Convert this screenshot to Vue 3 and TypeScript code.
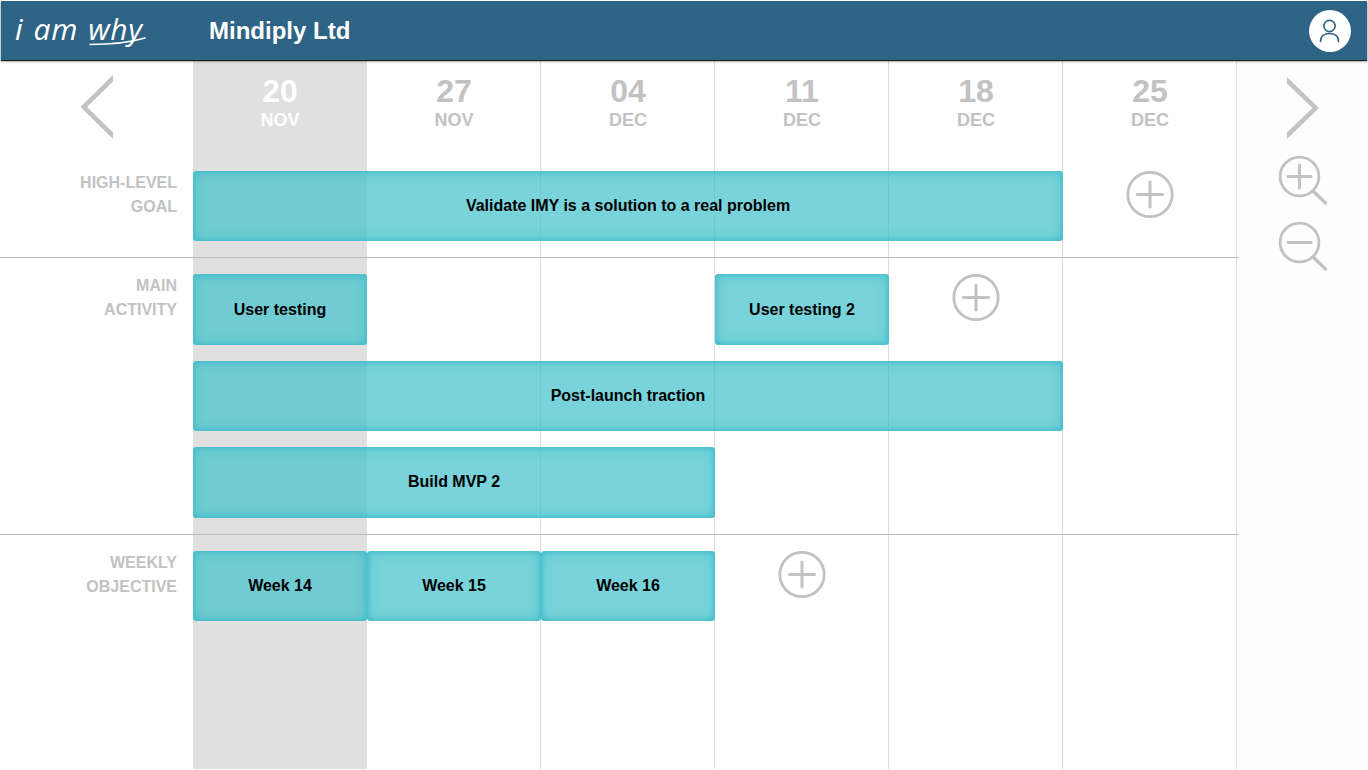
<script setup lang="ts">
interface Week {
  day: string;
  month: string;
  current?: boolean;
}

interface Bar {
  title: string;
  col: string;
  row: number;
  tight?: boolean;
}

const weeks: Week[] = [
  { day: "20", month: "NOV", current: true },
  { day: "27", month: "NOV" },
  { day: "04", month: "DEC" },
  { day: "11", month: "DEC" },
  { day: "18", month: "DEC" },
  { day: "25", month: "DEC" },
];

// grid lines: column 2 is the first week, row 2 the goal row
const bars: Bar[] = [
  { title: "Validate IMY is a solution to a real problem", col: "2 / 7", row: 2 },
  { title: "User testing", col: "2 / 3", row: 4 },
  { title: "User testing 2", col: "5 / 6", row: 4 },
  { title: "Post-launch traction", col: "2 / 7", row: 6 },
  { title: "Build MVP 2", col: "2 / 5", row: 8, tight: true },
  { title: "Week 14", col: "2 / 3", row: 10 },
  { title: "Week 15", col: "3 / 4", row: 10 },
  { title: "Week 16", col: "4 / 5", row: 10 },
];

const addButtons = [
  { col: 7, row: 2 },
  { col: 6, row: 4 },
  { col: 5, row: 10 },
];
</script>

<template>
  <div class="page">
    <header class="topbar">
      <div class="logo">
        <span class="logo-text">i am why</span>
        <svg class="logo-swoosh" viewBox="0 0 60 12" width="60" height="12" fill="none">
          <path d="M2 9.5 C20 9.5 40 8 57 3" stroke="#fff" stroke-width="1.6" stroke-linecap="round" />
        </svg>
      </div>
      <div class="company">Mindiply Ltd</div>
      <div class="avatar">
        <svg viewBox="0 0 42 42" width="42" height="42" fill="none" stroke="#2d6384" stroke-width="1.6">
          <circle cx="20.5" cy="16" r="5.6" />
          <path d="M11.5 31.5 C11.5 26 15.5 23.5 20.5 23.5 C25.5 23.5 29.5 26 29.5 31.5" stroke-linecap="round" />
        </svg>
      </div>
    </header>

    <main class="board">
      <div
        v-for="(week, i) in weeks"
        :key="'col' + i"
        class="week-col"
        :class="{ current: week.current }"
        :style="{ gridColumn: i + 2 }"
      />

      <div class="nav nav-prev">
        <svg viewBox="0 0 34 64" width="34" height="64">
          <path d="M33 0 L0.5 32 L33 64 L33 57.5 L7 32 L33 6.5 Z" fill="#c2c2c2" />
        </svg>
      </div>

      <div
        v-for="(week, i) in weeks"
        :key="'head' + i"
        class="week-head"
        :class="{ current: week.current }"
        :style="{ gridColumn: i + 2 }"
      >
        <div class="day">{{ week.day }}</div>
        <div class="month">{{ week.month }}</div>
      </div>

      <div class="side-tools">
        <svg viewBox="0 0 34 62" width="34" height="62" class="nav-next">
          <path d="M1 0 L33 31 L1 62 L1 55.5 L26.5 31 L1 6.5 Z" fill="#c2c2c2" />
        </svg>
        <svg class="zoom-icon" viewBox="0 0 54 54" width="54" height="54" fill="none" stroke="#c2c2c2">
          <circle cx="24.5" cy="24.5" r="19.4" stroke-width="2.8" />
          <path d="M38 39 L51.5 52" stroke-width="3.2" />
          <path d="M13 24.5 H36 M24.5 13 V36" stroke-width="3" stroke-linecap="round" />
        </svg>
        <svg class="zoom-icon" viewBox="0 0 54 54" width="54" height="54" fill="none" stroke="#c2c2c2">
          <circle cx="24.5" cy="24.5" r="19.4" stroke-width="2.8" />
          <path d="M38 39 L51.5 52" stroke-width="3.2" />
          <path d="M13 24.5 H36" stroke-width="3" stroke-linecap="round" />
        </svg>
      </div>

      <div class="row-label" style="grid-row: 2">HIGH-LEVEL<br />GOAL</div>
      <div class="divider" style="grid-row: 3" />
      <div class="row-label" style="grid-row: 4">MAIN<br />ACTIVITY</div>
      <div class="divider" style="grid-row: 9" />
      <div class="row-label" style="grid-row: 10">WEEKLY<br />OBJECTIVE</div>

      <div
        v-for="bar in bars"
        :key="bar.title"
        class="bar"
        :class="{ tight: bar.tight }"
        :style="{ gridColumn: bar.col, gridRow: bar.row }"
      >
        {{ bar.title }}
      </div>

      <div
        v-for="btn in addButtons"
        :key="btn.col"
        class="add"
        :style="{ gridColumn: btn.col, gridRow: btn.row }"
      >
        <svg viewBox="0 0 48 48" width="48" height="48" fill="none" stroke="#c2c2c2" stroke-width="2.8">
          <circle cx="24" cy="23.5" r="22.2" />
          <path d="M11.5 23.5 H36.5 M24 11 V36" stroke-width="3" stroke-linecap="round" />
        </svg>
      </div>
    </main>
  </div>
</template>

<style scoped>
.page {
  width: 1368px;
  height: 770px;
  overflow: hidden;
  display: flex;
  flex-direction: column;
  background: #fff;
  font-family: "Liberation Sans", Arial, sans-serif;
}

.topbar {
  position: relative;
  z-index: 2;
  flex: none;
  height: 59px;
  margin: 1px 1px 1px;
  display: flex;
  align-items: center;
  background: #2d6384;
  box-shadow: 0 1px 1px rgba(0, 0, 0, 0.85), 0 2px 3px rgba(0, 0, 0, 0.2);
  color: #fff;
}

.logo {
  position: relative;
  width: 208px;
  height: 59px;
  flex: none;
  padding-left: 14px;
  box-sizing: border-box;
}

.logo-text {
  font-family: "Open Sans", sans-serif;
  font-style: italic;
  font-weight: 400;
  font-size: 30px;
  line-height: 56px;
  letter-spacing: 0.6px;
  word-spacing: 2px;
}

.logo-swoosh {
  position: absolute;
  left: 87px;
  top: 34px;
}

.company {
  font-size: 24px;
  font-weight: 700;
}

.avatar {
  margin-left: auto;
  margin-right: 16px;
  width: 42px;
  height: 42px;
  border-radius: 50%;
  background: #fff;
}

.avatar svg {
  display: block;
}

.board {
  flex: 1;
  min-height: 0;
  padding-bottom: 1px;
  display: grid;
  grid-template-columns: 193px repeat(6, 174px) 1fr;
  grid-template-rows: 110px 70px 33px 71px 16px 70px 16px 71px 33px 70px 1fr;
}

.week-col {
  grid-row: 1 / -1;
  border-right: 1px solid #dcdcdc;
}

.week-col.current {
  background: #e0e0e0;
  border-right: 0;
}

.nav-prev {
  grid-column: 1;
  grid-row: 1;
  display: flex;
  justify-content: flex-end;
  padding: 14px 79px 0 0;
}

.nav svg,
.side-tools svg {
  display: block;
}

.week-head {
  grid-row: 1;
  padding-top: 12px;
  text-align: center;
  font-weight: 700;
  color: #c2c2c2;
}

.week-head.current {
  color: #fff;
}

.day {
  font-size: 32px;
  line-height: 36px;
}

.month {
  font-size: 18px;
  line-height: 20px;
  margin-top: 1px;
}

.side-tools {
  grid-column: 8;
  grid-row: 1 / -1;
  display: flex;
  flex-direction: column;
  align-items: flex-start;
  padding: 16px 0 0 49px;
  background: #fdfdfd;
}

.zoom-icon {
  margin: 13px 0 0 -11px;
}

.zoom-icon + .zoom-icon {
  margin-top: 12px;
}

.row-label {
  grid-column: 1;
  padding: 0 16px 0 0;
  align-self: start;
  text-align: right;
  font-size: 16px;
  font-weight: 700;
  line-height: 24px;
  color: #c2c2c2;
}

.divider {
  grid-column: 1 / 8;
  align-self: center;
  height: 1px;
  margin-right: -2px;
  background: #bdbdbd;
}

.bar {
  display: flex;
  align-items: center;
  justify-content: center;
  border-radius: 4px;
  background: rgba(68, 194, 204, 0.72);
  box-shadow: inset 0 0 5px #42bcca, inset 0 0 12px #42bcca;
  font-size: 16px;
  font-weight: 700;
  color: #000;
}

.bar.tight {
  padding-bottom: 1px;
  box-sizing: border-box;
}

.add {
  display: flex;
  justify-content: center;
  align-self: start;
}

.add svg {
  display: block;
}
</style>
